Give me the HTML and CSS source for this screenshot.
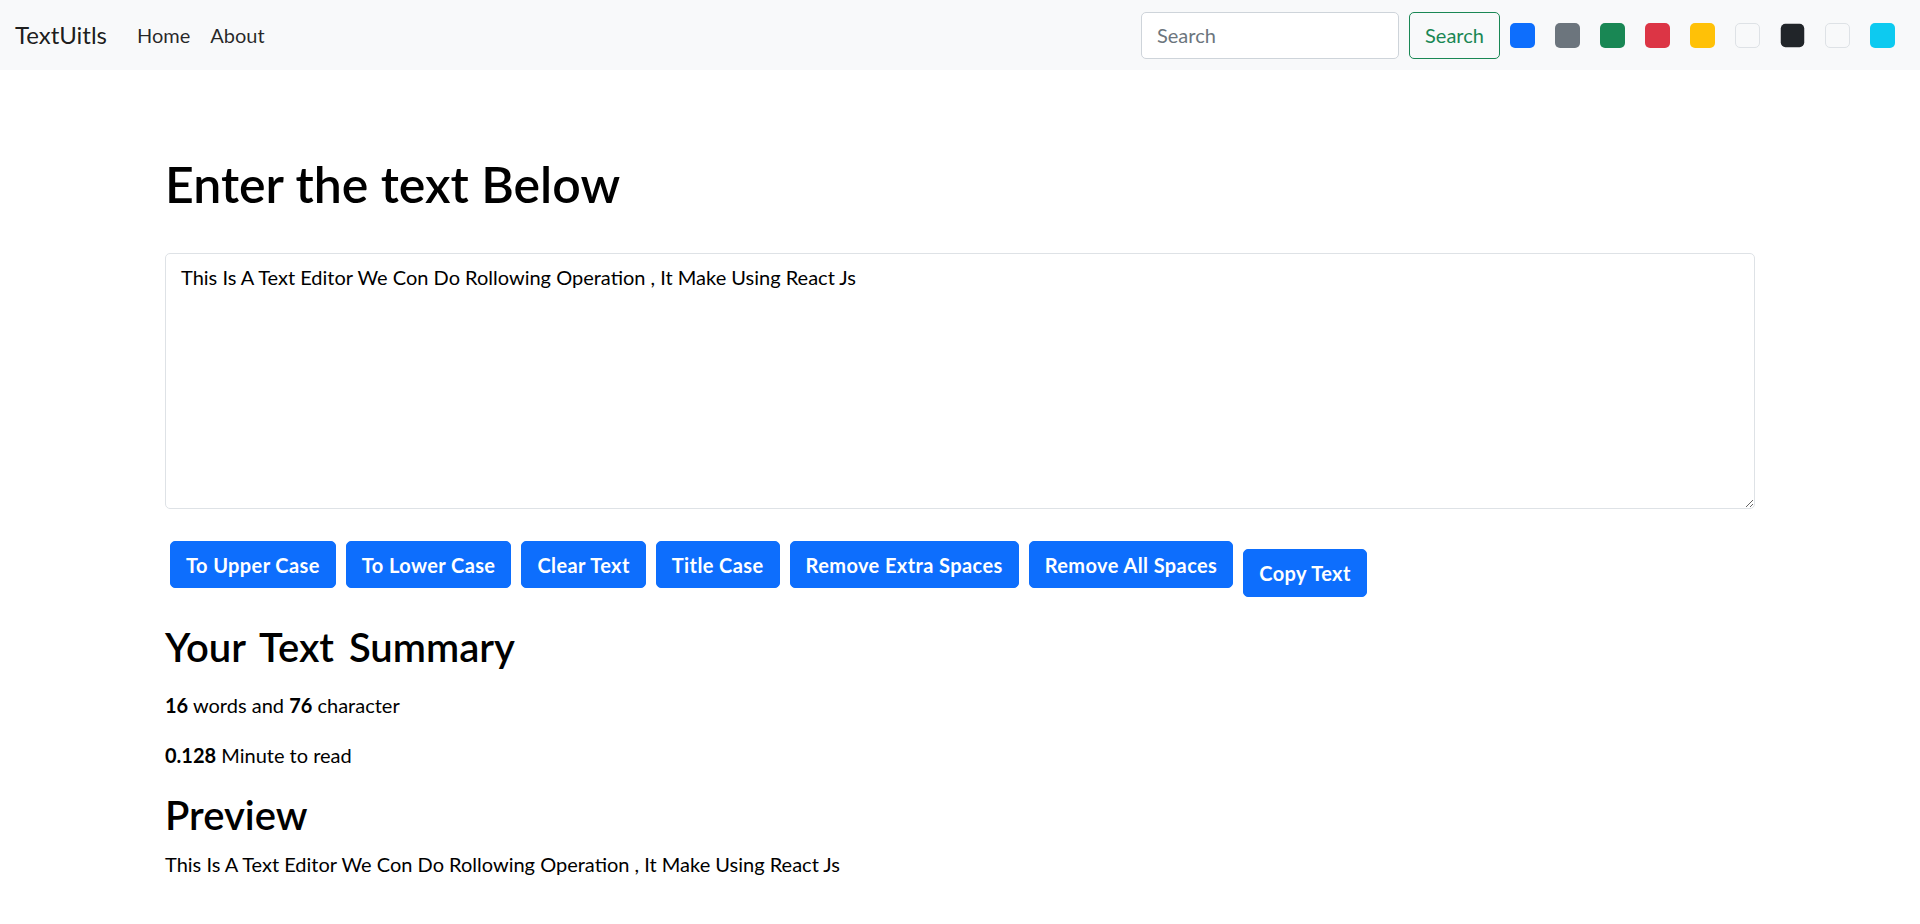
FILE: index.html
```html
<!DOCTYPE html>
<html lang="en">
<head>
<meta charset="utf-8">
<title>TextUitls</title>
<link rel="stylesheet" href="styles.css">
</head>
<body>
<nav class="navbar">
  <div class="nav-left">
    <a class="brand" href="#">TextUitls</a>
    <a class="nav-link" href="#">Home</a>
    <a class="nav-link" href="#">About</a>
  </div>
  <div class="nav-right">
    <form class="search-form">
      <input class="search-input" type="search" placeholder="Search">
      <button class="search-btn" type="button">Search</button>
    </form>
    <div class="swatches">
      <span class="swatch sw-primary"></span>
      <span class="swatch sw-secondary"></span>
      <span class="swatch sw-success"></span>
      <span class="swatch sw-danger"></span>
      <span class="swatch sw-warning"></span>
      <span class="swatch sw-light"></span>
      <span class="swatch sw-dark"></span>
      <span class="swatch sw-light"></span>
      <span class="swatch sw-info"></span>
    </div>
  </div>
</nav>

<main class="container">
  <section class="editor">
    <h1 class="title">Enter the text Below</h1>
    <textarea class="text-box" rows="8">This Is A Text Editor We Con Do Rollowing Operation , It Make Using React Js</textarea>
    <div class="actions">
      <button class="btn" type="button">To Upper Case</button>
      <button class="btn" type="button">To Lower Case</button>
      <button class="btn" type="button">Clear Text</button>
      <button class="btn" type="button">Title Case</button>
      <button class="btn" type="button">Remove Extra Spaces</button>
      <button class="btn" type="button">Remove All Spaces</button>
      <button class="btn btn-copy" type="button">Copy Text</button>
    </div>
  </section>

  <section class="summary">
    <h2 class="summary-title">Your Text Summary</h2>
    <p class="stat"><b>16</b> words and <b>76</b> character</p>
    <p class="stat"><b>0.128</b> Minute to read</p>
    <h2 class="preview-title">Preview</h2>
    <p class="preview">This Is A Text Editor We Con Do Rollowing Operation , It Make Using React Js</p>
  </section>
</main>
</body>
</html>
```

FILE: styles.css
```css
* { box-sizing: border-box; }

body {
  margin: 0;
  font-family: Lato, "Open Sans", sans-serif;
  font-size: 20px;
  line-height: 1.5;
  color: #000;
  background: #fff;
}

.navbar {
  height: 70px;
  background: #f8f9fa;
  display: flex;
  align-items: center;
  justify-content: space-between;
  padding: 0 25px 0 15px;
}

.nav-left {
  display: flex;
  align-items: center;
}

.brand {
  font-size: 24px;
  color: rgba(0, 0, 0, 0.9);
  text-decoration: none;
  margin-right: 20px;
}

.nav-link {
  color: rgba(0, 0, 0, 0.85);
  text-decoration: none;
  padding: 0 10px;
}

.nav-right {
  display: flex;
  align-items: center;
}

.search-form {
  display: flex;
  align-items: center;
  margin-right: 10px;
}

.search-input {
  width: 258px;
  height: 47px;
  border: 1px solid #ced4da;
  border-radius: 5px;
  padding: 0 15px;
  font-family: inherit;
  font-size: 20px;
  color: #212529;
  background: #fff;
  margin-right: 10px;
  outline: none;
}

.search-input::placeholder { color: #6c757d; }

.search-btn {
  height: 47px;
  width: 91px;
  border: 1px solid #198754;
  border-radius: 5px;
  background: transparent;
  color: #198754;
  font-family: inherit;
  font-size: 20px;
  padding: 0 15px;
}

.swatches {
  display: flex;
  gap: 20px;
}

.swatch {
  width: 25px;
  height: 25px;
  border-radius: 5px;
  display: block;
}

.sw-primary { background: #0d6efd; }
.sw-secondary { background: #6c757d; }
.sw-success { background: #198754; }
.sw-danger { background: #dc3545; }
.sw-warning { background: #ffc107; }
.sw-light { background: #f8f9fa; border: 1px solid #dee2e6; }
.sw-dark { background: #212529; transform: scale(0.94); }
.sw-info { background: #0dcaf0; }

.container {
  width: 1590px;
  margin: 0 auto;
}

.title {
  font-size: 50px;
  font-weight: 600;
  line-height: 1.2;
  margin: 84px 0 39px;
}

.text-box {
  display: block;
  width: 100%;
  height: 256px;
  border: 1px solid #dee2e6;
  border-radius: 5px;
  padding: 7.5px 15px;
  font-family: inherit;
  font-size: 20px;
  line-height: 30px;
  color: #000;
  resize: both;
}

.actions {
  display: flex;
  flex-wrap: wrap;
  align-items: flex-start;
  margin-top: 32px;
}

.btn {
  margin: 0 5px;
  background: #0d6efd;
  color: #fff;
  border: 1px solid #0d6efd;
  border-radius: 5px;
  padding: 7.5px 15px;
  font-family: inherit;
  font-size: 20px;
  font-weight: 700;
  line-height: 30px;
  letter-spacing: 0.4px;
}

.btn-copy {
  margin-top: 8px;
  height: 48px;
}

.summary {
  margin-top: 26px;
}

.summary h2 {
  font-size: 40px;
  font-weight: 600;
  line-height: 1.2;
}

.summary-title {
  margin: 0 0 19px;
  word-spacing: 5px;
}

.stat { margin: 0 0 20px; }

.preview-title { margin: 21px 0 10px; }

.preview { margin: 0 0 20px; }
```
